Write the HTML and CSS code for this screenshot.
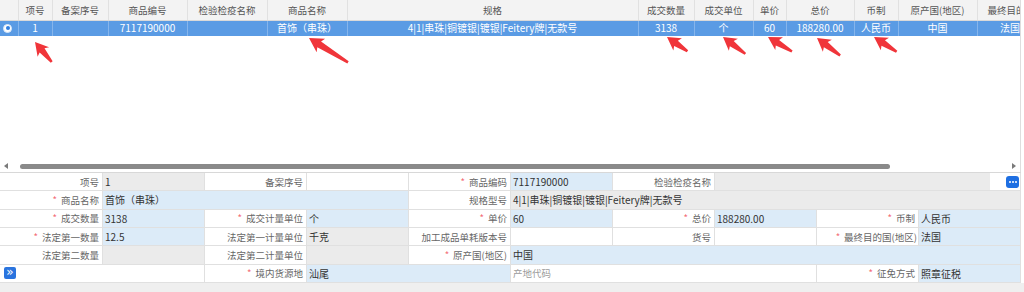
FILE: index.html
```html
<!DOCTYPE html>
<html lang="zh-CN">
<head>
<meta charset="utf-8">
<title>商品信息</title>
<link rel="stylesheet" href="styles.css">
</head>
<body>
<section class="grid">
  <div class="grid-view">
    <table class="gt">
      <thead>
        <tr>
          <th class="w-sel"></th>
          <th class="w-xh">项号</th>
          <th class="w-ba">备案序号</th>
          <th class="w-bh">商品编号</th>
          <th class="w-jy">检验检疫名称</th>
          <th class="w-mc">商品名称</th>
          <th class="w-gg">规格</th>
          <th class="w-sl">成交数量</th>
          <th class="w-dw">成交单位</th>
          <th class="w-dj">单价</th>
          <th class="w-zj">总价</th>
          <th class="w-bz">币制</th>
          <th class="w-yc">原产国(地区)</th>
          <th class="w-md">最终目的国(地区)</th>
        </tr>
      </thead>
      <tbody>
        <tr class="sel">
          <td><span class="radio"></span></td>
          <td>1</td>
          <td></td>
          <td>7117190000</td>
          <td></td>
          <td>首饰（串珠）</td>
          <td>4|1|串珠|铜镀银|镀银|Feitery牌|无款号</td>
          <td>3138</td>
          <td>个</td>
          <td>60</td>
          <td>188280.00</td>
          <td>人民币</td>
          <td>中国</td>
          <td>法国</td>
        </tr>
      </tbody>
    </table>
  </div>
  <div class="hscroll">
    <span class="tri-l"></span>
    <div class="track"><div class="thumb"></div></div>
    <span class="tri-r"></span>
  </div>
</section>

<section class="form">
  <!-- row 1 -->
  <div class="lbl">项号</div>
  <div class="val g">1</div>
  <div class="lbl">备案序号</div>
  <div class="val"></div>
  <div class="lbl"><i class="req">*</i>商品编码</div>
  <div class="val b">7117190000</div>
  <div class="lbl">检验检疫名称</div>
  <div class="val s3 pick"><span class="pick-field"></span><span class="pick-side"><span class="more"><i></i><i></i><i></i></span></span></div>

  <!-- row 2 -->
  <div class="lbl"><i class="req">*</i>商品名称</div>
  <div class="val b s3">首饰（串珠）</div>
  <div class="lbl">规格型号</div>
  <div class="val g s5">4|1|串珠|铜镀银|镀银|Feitery牌|无款号</div>

  <!-- row 3 -->
  <div class="lbl"><i class="req">*</i>成交数量</div>
  <div class="val b">3138</div>
  <div class="lbl"><i class="req">*</i>成交计量单位</div>
  <div class="val b">个</div>
  <div class="lbl"><i class="req">*</i>单价</div>
  <div class="val b">60</div>
  <div class="lbl"><i class="req">*</i>总价</div>
  <div class="val b">188280.00</div>
  <div class="lbl"><i class="req">*</i>币制</div>
  <div class="val b">人民币</div>

  <!-- row 4 -->
  <div class="lbl"><i class="req">*</i>法定第一数量</div>
  <div class="val b">12.5</div>
  <div class="lbl">法定第一计量单位</div>
  <div class="val g">千克</div>
  <div class="lbl">加工成品单耗版本号</div>
  <div class="val"></div>
  <div class="lbl">货号</div>
  <div class="val"></div>
  <div class="lbl tight"><i class="req">*</i>最终目的国(地区)</div>
  <div class="val b">法国</div>

  <!-- row 5 -->
  <div class="lbl">法定第二数量</div>
  <div class="val g"></div>
  <div class="lbl">法定第二计量单位</div>
  <div class="val g"></div>
  <div class="lbl"><i class="req">*</i>原产国(地区)</div>
  <div class="val b s5">中国</div>

  <!-- row 6 -->
  <div class="val s2"><span class="expand">»</span></div>
  <div class="lbl"><i class="req">*</i>境内货源地</div>
  <div class="val b s2">汕尾</div>
  <div class="val s3 ph">产地代码</div>
  <div class="lbl"><i class="req">*</i>征免方式</div>
  <div class="val b">照章征税</div>
</section>

<div class="footer"></div>

<svg class="marks" width="1024" height="292" viewBox="0 0 1024 292" aria-hidden="true">
  <g fill="#f0353a">
    <polygon transform="translate(35 42) rotate(50)" points="0,0 13,-7.5 11,-3.2 26,-1.2 26,1.2 11,3.2 13,7.5"/>
    <polygon transform="translate(309 38) rotate(32)" points="0,0 14,-8 12,-3.5 46,-1.3 46,1.3 12,3.5 14,8"/>
    <polygon transform="translate(667 37) rotate(35)" points="0,0 13,-7.5 11,-3.2 25,-1.2 25,1.2 11,3.2 13,7.5"/>
    <polygon transform="translate(723 37) rotate(37)" points="0,0 13,-7.5 11,-3.2 28,-1.2 28,1.2 11,3.2 13,7.5"/>
    <polygon transform="translate(768 37) rotate(31)" points="0,0 13,-7.5 11,-3.2 28,-1.2 28,1.2 11,3.2 13,7.5"/>
    <polygon transform="translate(817 38) rotate(37)" points="0,0 13,-7.5 11,-3.2 29,-1.2 29,1.2 11,3.2 13,7.5"/>
    <polygon transform="translate(874 37) rotate(33)" points="0,0 13,-7.5 11,-3.2 27,-1.2 27,1.2 11,3.2 13,7.5"/>
  </g>
</svg>
</body>
</html>
```
FILE: styles.css
```css
* { box-sizing: border-box; margin: 0; padding: 0; }

body {
  position: relative;
  width: 1024px;
  height: 292px;
  overflow: hidden;
  background: #fff;
  font-family: "Noto Sans CJK SC", "Microsoft YaHei", "Noto Sans", sans-serif;
  font-size: 10px;
  color: #333;
}

/* ---------- data grid ---------- */
.grid {
  width: 1021px;
  height: 172px;
  border-right: 1px solid #dedede;
  display: flex;
  flex-direction: column;
}

.grid-view {
  height: 160px;
  overflow: hidden;
}

.gt {
  table-layout: fixed;
  border-collapse: collapse;
  width: 1043px;
}

.gt th {
  height: 20px;
  background: #f3f3f3;
  color: #555;
  font-weight: normal;
  font-size: 9.5px;
  line-height: 12px;
  text-align: center;
  border-right: 1px solid #e1e1e1;
  border-bottom: 1px solid #d9d9d9;
  white-space: nowrap;
  overflow: hidden;
}

.gt td {
  height: 16px;
  background: #5a9be4;
  color: #fff;
  font-size: 10px;
  line-height: 12px;
  text-align: center;
  border-right: 1px solid #86b5eb;
  white-space: nowrap;
  overflow: hidden;
}

.w-sel { width: 18px; }
.w-xh { width: 34px; }
.w-ba { width: 56px; }
.w-bh { width: 79px; }
.w-jy { width: 80px; }
.w-mc { width: 80px; }
.w-gg { width: 291px; }
.w-sl { width: 56px; }
.w-dw { width: 59px; }
.w-dj { width: 33px; }
.w-zj { width: 68px; }
.w-bz { width: 44px; }
.w-yc { width: 79px; }
.gt th.w-md { width: 66px; padding: 0 6px 0 10px; }

.radio {
  display: block;
  width: 9px;
  height: 9px;
  margin: 0 auto 0 3px;
  border-radius: 50%;
  background: #fff;
  border: 1px solid #d7e6f8;
  position: relative;
}
.radio::after {
  content: "";
  position: absolute;
  left: 1.5px;
  top: 1.5px;
  width: 4px;
  height: 4px;
  border-radius: 50%;
  background: #2f7ee0;
}

.hscroll {
  height: 12px;
  display: flex;
  align-items: center;
  padding: 0 4px;
}
.tri-l {
  width: 0;
  height: 0;
  border-top: 3px solid transparent;
  border-bottom: 3px solid transparent;
  border-right: 4px solid #7a7a7a;
}
.tri-r {
  width: 0;
  height: 0;
  border-top: 3px solid transparent;
  border-bottom: 3px solid transparent;
  border-left: 4px solid #7a7a7a;
}
.track {
  flex: 1;
  margin-left: 12px;
  margin-right: 8px;
}
.thumb {
  width: 870px;
  height: 5px;
  border-radius: 3px;
  background: #8a8a8a;
}

/* ---------- detail form ---------- */
.form {
  display: grid;
  grid-template-columns: 103px repeat(9, 102px);
  grid-auto-rows: 18.33px;
  width: 1021px;
  border-top: 1px solid #d8d8d8;
}

.lbl,
.val {
  display: flex;
  align-items: center;
  border-right: 1px solid #e0e0e0;
  border-bottom: 1px solid #e0e0e0;
  white-space: nowrap;
  overflow: hidden;
}

.lbl {
  justify-content: flex-end;
  padding-right: 3px;
  background: #fff;
  color: #666;
  font-size: 9.5px;
}
.lbl.tight { padding-right: 1px; }

.req {
  font-style: normal;
  color: #f36b75;
  margin-right: 4px;
}

.val {
  padding-left: 2px;
  background: #fff;
  color: #333;
  font-size: 10px;
}
.val.g { background: #ebebeb; }
.val.b { background: #dcebf8; }
.val.ph { color: #9a9a9a; font-size: 9.5px; }

.s2 { grid-column: span 2; }
.s3 { grid-column: span 3; }
.s5 { grid-column: span 5; }

.pick { padding-left: 0; }
.pick-field {
  flex: 1;
  align-self: stretch;
  background: #ebebeb;
}
.pick-side {
  width: 30px;
  align-self: stretch;
  display: flex;
  align-items: center;
  justify-content: flex-end;
  padding-right: 1px;
  background: #fff;
}
.more {
  width: 13px;
  height: 12px;
  border-radius: 3px;
  background: #1e6fe2;
  display: flex;
  align-items: center;
  justify-content: center;
  gap: 1px;
}
.more i {
  width: 2px;
  height: 2px;
  border-radius: 50%;
  background: #fff;
}

.expand {
  width: 12px;
  height: 12px;
  margin-left: 2px;
  border-radius: 2px;
  background: #2a74de;
  color: #fff;
  font-size: 12px;
  line-height: 10px;
  text-align: center;
  font-family: "DejaVu Sans", sans-serif;
}

.footer {
  height: 9px;
  background: #efefef;
}

.marks {
  position: absolute;
  left: 0;
  top: 0;
  pointer-events: none;
}
```
